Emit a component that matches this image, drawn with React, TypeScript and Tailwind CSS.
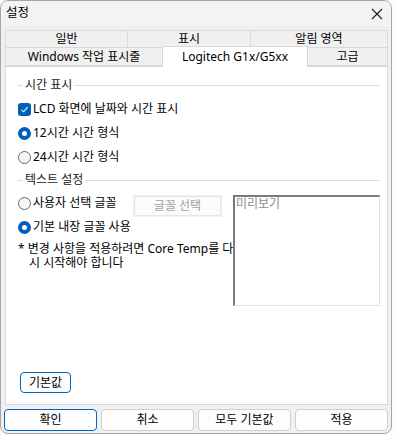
import React from "react";

const font = { fontFamily: '"Noto Sans", "Noto Sans CJK KR", sans-serif' };

function Radio({ checked }: { checked: boolean }) {
  return checked ? (
    <span className="flex h-[13px] w-[13px] shrink-0 items-center justify-center rounded-full bg-[#005fb8]">
      <span className="h-[5px] w-[5px] rounded-full bg-white" />
    </span>
  ) : (
    <span className="h-[13px] w-[13px] shrink-0 rounded-full border border-[#6b6b6b] bg-[#f6f6f6]" />
  );
}

function Check() {
  return (
    <span className="flex h-[13px] w-[13px] shrink-0 items-center justify-center rounded-[3px] bg-[#005fb8]">
      <svg width="9" height="9" viewBox="0 0 9 9">
        <path d="M1.5 4.8 L3.6 6.8 L7.6 2.2" fill="none" stroke="white" strokeWidth="1.1" />
      </svg>
    </span>
  );
}

function GroupHeader({ label }: { label: string }) {
  return (
    <div className="flex h-[14px] items-center">
      <div className="h-px w-[5px] bg-[#dcdcdc]" />
      <span className="px-[2px] text-[12px] leading-[14px] text-[#1a1a1a]">{label}</span>
      <div className="h-px flex-1 bg-[#dcdcdc]" />
    </div>
  );
}

export default function App() {
  return (
    <div className="h-[435px] w-[395px] bg-[#fbfbfb]" style={font}>
      <div className="flex h-[434px] w-[392px] flex-col overflow-hidden rounded-[8px] border border-[#a6a6a6] bg-[#f0f0f0] text-black">
        {/* Title bar */}
        <div className="flex h-[25px] items-center justify-between bg-[#f3f3f3] pl-[5px] pr-[8px]">
          <span className="text-[12.5px] leading-none">설정</span>
          <svg width="12" height="12" viewBox="0 0 12 12">
            <path d="M1 1 L11 11 M11 1 L1 11" stroke="#1a1a1a" strokeWidth="1.1" />
          </svg>
        </div>

        {/* Tabs */}
        <div className="ml-[4px] mt-[4px] w-[383px] text-[12px]">
          <div className="flex h-[18px]">
            <div className="flex w-[122px] items-center justify-center border border-r-0 border-[#d9d9d9] leading-none">일반</div>
            <div className="flex w-[123px] items-center justify-center border border-r-0 border-[#d9d9d9] leading-none">표시</div>
            <div className="flex flex-1 items-center justify-center border border-[#d9d9d9] leading-none">알림 영역</div>
          </div>
          <div className="flex h-[18px]">
            <div className="flex w-[157px] items-center justify-center border border-t-0 border-r-0 border-[#d9d9d9] leading-none">Windows 작업 표시줄</div>
            <div className="relative z-10 -mt-[2px] flex h-[21px] w-[146px] items-center justify-center border border-b-0 border-[#d9d9d9] bg-white pb-[1px] leading-none">
              Logitech G1x/G5xx
            </div>
            <div className="flex flex-1 items-center justify-center border border-t-0 border-l-0 border-[#d9d9d9] leading-none">고급</div>
          </div>
        </div>

        {/* Panel */}
        <div className="ml-[4px] flex h-[339px] w-[383px] flex-col border border-[#d9d9d9] bg-white pl-[12px] pr-[7px] pt-[11px] text-[12px]">
          <GroupHeader label="시간 표시" />
          <div className="mt-[5px] flex h-[24px] items-center gap-[2px]">
            <Check />
            <span className="leading-none">LCD 화면에 날짜와 시간 표시</span>
          </div>
          <div className="flex h-[24px] items-center gap-[2px]">
            <Radio checked />
            <span className="leading-none">12시간 시간 형식</span>
          </div>
          <div className="flex h-[24px] items-center gap-[2px]">
            <Radio checked={false} />
            <span className="leading-none">24시간 시간 형식</span>
          </div>
          <div className="mt-[4px]">
            <GroupHeader label="텍스트 설정" />
          </div>
          <div className="mt-[4px] flex">
            <div className="flex w-[215px] flex-col">
              <div className="flex h-[24px] items-center">
                <div className="flex w-[115px] items-center gap-[2px]">
                  <Radio checked={false} />
                  <span className="leading-none">사용자 선택 글꼴</span>
                </div>
                <div className="mt-[6px] flex h-[22px] w-[89px] bg-[#f0f0f0] p-[1px]">
                  <div className="flex flex-1 items-center justify-center rounded-[3px] border border-[#e6e6e6] bg-[#fbfbfb] leading-none text-[#a0a0a0]">
                    글꼴 선택
                  </div>
                </div>
              </div>
              <div className="flex h-[24px] items-center gap-[2px]">
                <Radio checked />
                <span className="leading-none">기본 내장 글꼴 사용</span>
              </div>
              <div className="mt-[3px] whitespace-nowrap text-[12px] leading-[14px]">
                <div>* 변경 사항을 적용하려면 Core Temp를 다</div>
                <div className="pl-[11px]">시 시작해야 합니다</div>
              </div>
            </div>
            <div className="mt-[4px] h-[111px] w-[147px] border-2 border-b border-r border-t-2 border-l-2 border-[#e3e3e3] border-l-[#7a7a7a] border-t-[#7a7a7a] bg-white pl-[1px] text-[12px] leading-[14px] text-[#8c8c8c]">
              미리보기
            </div>
          </div>
          <div className="flex-1" />
          <div className="mb-[11px] ml-[2px] flex h-[21px] w-[51px] items-center justify-center rounded-[4px] border border-[#0067c0] bg-[#fdfdfd] leading-none">
            기본값
          </div>
        </div>

        {/* Bottom buttons */}
        <div className="mt-[4px] grid w-[387px] grid-cols-4 gap-[4px] pl-[3px] text-[12px]">
          <div className="flex h-[22px] items-center justify-center rounded-[4px] border border-[#0067c0] bg-[#fdfdfd] leading-none">확인</div>
          <div className="flex h-[22px] items-center justify-center rounded-[4px] border border-[#d0d0d0] bg-[#fdfdfd] leading-none">취소</div>
          <div className="flex h-[22px] items-center justify-center rounded-[4px] border border-[#d0d0d0] bg-[#fdfdfd] leading-none">모두 기본값</div>
          <div className="flex h-[22px] items-center justify-center rounded-[4px] border border-[#d0d0d0] bg-[#fdfdfd] leading-none">적용</div>
        </div>
      </div>
    </div>
  );
}
